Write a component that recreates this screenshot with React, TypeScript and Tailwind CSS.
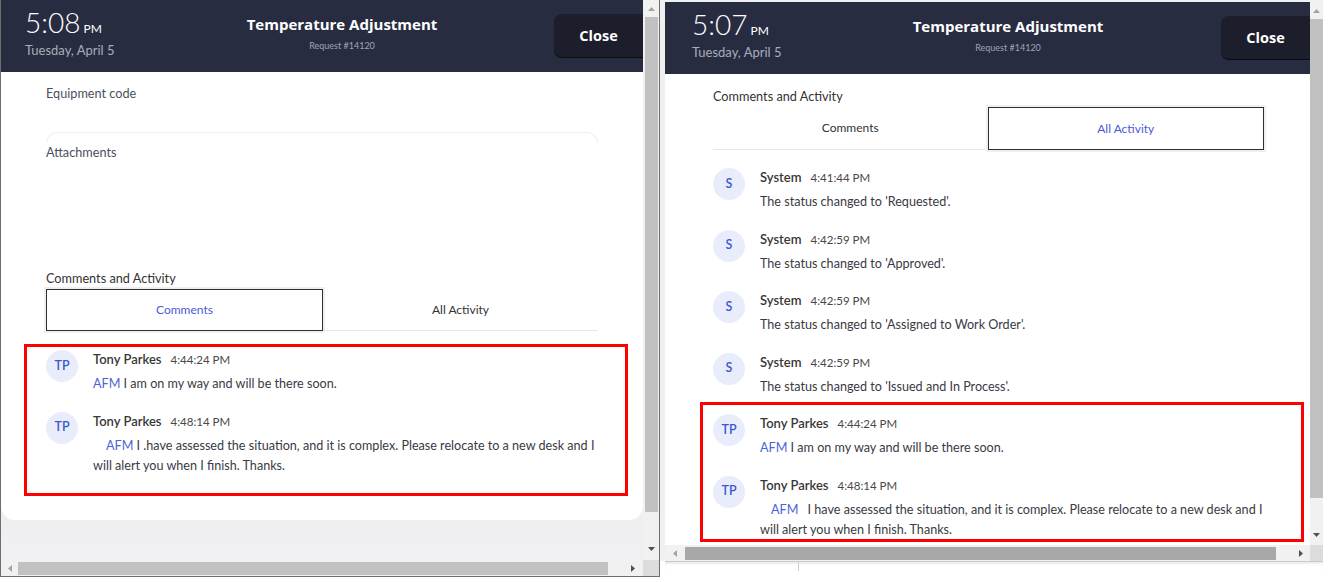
import React from 'react';

type Dir = 'up' | 'down' | 'left' | 'right';

// small scrollbar triangle
function Arrow({ dir, dark }: { dir: Dir; dark?: boolean }) {
  const vertical = dir === 'up' || dir === 'down';
  const w = vertical ? 7 : 4;
  const h = vertical ? 4 : 7;
  const points = {
    up: '0,4 3.5,0 7,4',
    down: '0,0 7,0 3.5,4',
    left: '4,0 4,7 0,3.5',
    right: '0,0 0,7 4,3.5',
  }[dir];
  return (
    <svg width={w} height={h} viewBox={`0 0 ${w} ${h}`}>
      <polygon points={points} fill={dark ? '#505050' : '#a3a3a3'} />
    </svg>
  );
}

const Header = ({ time, leftClass }: { time: string; leftClass: string }) => (
  <div className="flex h-[72px] shrink-0 bg-[#282c41] text-white">
    <div className={`${leftClass} pt-[6px] shrink-0`}>
      <div className="flex items-baseline">
        <span className="text-[28px] leading-[32px] font-light">{time}</span>
        <span className="ml-[3px] text-[12px] leading-[14px]">PM</span>
      </div>
      <div className="mt-[3px] text-[13px] leading-[18px] text-[#a9adba]">Tuesday, April 5</div>
    </div>
    <div className="w-[210px] shrink-0 pt-[14px] text-center">
      <div className="font-['Open_Sans',sans-serif] font-bold text-[15px] leading-[20px]">Temperature Adjustment</div>
      <div className="mt-[6px] text-[9px] leading-[12px] text-[#a0a4b3]">Request #14120</div>
    </div>
    <div className="flex-1" />
    <button className="mt-[14px] h-[43px] w-[89px] shrink-0 rounded-l-[8px] bg-[#1c1e2b] shadow-[0_1px_0_#0b0c12] font-['Open_Sans',sans-serif] font-bold text-[14.5px] text-white">
      Close
    </button>
  </div>
);

const Tabs = ({ active, heightClass }: { active: 'comments' | 'all'; heightClass: string }) => {
  const on = 'border-[1.5px] border-[#2e2e2e] text-[#4b5ad6] shadow-[0_0_0_2px_#efeff1]';
  const off = 'border-b border-[#e7e8ec] text-[#333]';
  return (
    <div className={`flex ${heightClass}`}>
      <div className={`flex-1 flex items-center justify-center text-[12px] ${active === 'comments' ? on : off}`}>Comments</div>
      <div className={`flex-1 flex items-center justify-center text-[12px] ${active === 'all' ? on : off}`}>All Activity</div>
    </div>
  );
};

function Entry({ initials, name, time, children }: { initials: string; name: string; time: string; children: React.ReactNode }) {
  return (
    <div className="flex gap-[15px]">
      <div className="w-[32px] h-[32px] shrink-0 rounded-full bg-[#e9edfb] flex items-center justify-center text-[12.5px] font-semibold text-[#3c58cf]">
        {initials}
      </div>
      <div className="flex-1 min-w-0">
        <div className="h-[18px] flex items-baseline gap-[9px] overflow-visible">
          <span className="text-[13px] leading-[18px] font-semibold text-[#383838]">{name}</span>
          <span className="text-[11.5px] leading-[18px] text-[#474747]">{time}</span>
        </div>
        <div className="mt-[6px] text-[12.6px] leading-[20px] text-[#3a3a44] whitespace-nowrap">{children}</div>
      </div>
    </div>
  );
}

const Afm = ({ className = '' }: { className?: string }) => <span className={`text-[#4c63d9] ${className}`}>AFM</span>;

export default function App() {
  return (
    <div className="w-[1332px] h-[582px] overflow-hidden bg-white flex font-['Lato','Liberation_Sans',sans-serif] text-[#333]">
      {/* left window */}
      <div className="w-[660px] h-[577px] shrink-0 flex flex-col border-x border-b border-[#6f6f6f] bg-[#f0f0f0]">
        <div className="flex h-[560px]">
          <div className="w-[642px] h-full overflow-hidden bg-gradient-to-b from-[#e6e7eb] to-[#f0f0f3]">
            <div className="bg-white rounded-b-[14px] flex flex-col">
              <Header time="5:08" leftClass="w-[236px] pl-[24px]" />
              <div className="px-[45px] pt-[12px] pb-[44px]">
                <div className="text-[12.7px] leading-[18px] text-[#4b4f60]">Equipment code</div>
                <div className="mt-[30px] h-[11px] border-t border-x border-[#eef0f4] rounded-t-[12px]" />
                <div className="text-[12.7px] leading-[18px] text-[#4b4f60]">Attachments</div>
                <div className="mt-[108px] text-[12.7px] leading-[18px] text-[#333]">Comments and Activity</div>
                <div className="mt-[2px]">
                  <Tabs active="comments" heightClass="h-[42px]" />
                </div>
                <div className="relative mt-[19px] flex flex-col gap-[17.5px]">
                  <Entry initials="TP" name="Tony Parkes" time="4:44:24 PM">
                    <Afm /> I am on my way and will be there soon.
                  </Entry>
                  <Entry initials="TP" name="Tony Parkes" time="4:48:14 PM">
                    <Afm className="ml-[13px]" /> I .have assessed the situation, and it is complex. Please relocate to a new desk and I
                    <br />
                    will alert you when I finish. Thanks.
                  </Entry>
                  <div className="absolute top-[-6px] bottom-[-20px] left-[-22px] right-[-30px] border-[3px] border-[#ff0000] pointer-events-none" />
                </div>
              </div>
            </div>
          </div>
          <div className="w-[16px] h-full bg-[#f1f1f1] flex flex-col items-center">
            <div className="h-[17px] w-full flex items-center justify-center"><Arrow dir="up" /></div>
            <div className="w-[13px] h-[495px] bg-[#c1c1c1]" />
            <div className="flex-1" />
            <div className="h-[22px] w-full flex items-center justify-center"><Arrow dir="down" dark /></div>
          </div>
        </div>
        <div className="flex h-[16px] bg-[#f1f1f1]">
          <div className="w-[17px] flex items-center justify-center"><Arrow dir="left" /></div>
          <div className="w-[590px] my-[1.5px] bg-[#c1c1c1]" />
          <div className="flex-1" />
          <div className="w-[20px] flex items-center justify-center"><Arrow dir="right" dark /></div>
          <div className="w-[16px] bg-[#dcdcdc]" />
        </div>
      </div>

      {/* right window */}
      <div className="w-[663px] shrink-0 flex flex-col">
        <div className="bg-[#f0f0f0] pt-[2px] pl-[5px]">
          <div className="w-[658px] flex flex-col">
            <div className="flex h-[543px]">
              <div className="w-[645px] h-full overflow-hidden bg-white">
                <Header time="5:07" leftClass="w-[238px] pl-[27px]" />
                <div className="pl-[48px] pr-[46px] pt-[13px]">
                  <div className="text-[12.7px] leading-[18px] text-[#333]">Comments and Activity</div>
                  <div className="mt-[2px]">
                    <Tabs active="all" heightClass="h-[43px]" />
                  </div>
                  <div className="mt-[18px] flex flex-col gap-[17.5px]">
                    <Entry initials="S" name="System" time="4:41:44 PM">The status changed to 'Requested'.</Entry>
                    <Entry initials="S" name="System" time="4:42:59 PM">The status changed to 'Approved'.</Entry>
                    <Entry initials="S" name="System" time="4:42:59 PM">The status changed to 'Assigned to Work Order'.</Entry>
                    <Entry initials="S" name="System" time="4:42:59 PM">The status changed to 'Issued and In Process'.</Entry>
                    <div className="relative flex flex-col gap-[17.5px]">
                      <Entry initials="TP" name="Tony Parkes" time="4:44:24 PM">
                        <Afm /> I am on my way and will be there soon.
                      </Entry>
                      <Entry initials="TP" name="Tony Parkes" time="4:48:14 PM">
                        <Afm className="ml-[11px] mr-[6px]" /> I have assessed the situation, and it is complex. Please relocate to a new desk and I
                        <br />
                        will alert you when I finish. Thanks.
                      </Entry>
                      <div className="absolute top-[-12px] bottom-[-2px] left-[-13px] right-[-40px] border-[3px] border-[#ff0000] pointer-events-none" />
                    </div>
                  </div>
                </div>
              </div>
              <div className="w-[13px] h-full bg-[#f1f1f1] flex flex-col items-center">
                <div className="h-[17px] w-full flex items-center justify-center"><Arrow dir="up" /></div>
                <div className="w-full h-[479px] bg-[#c1c1c1]" />
                <div className="flex-1" />
                <div className="h-[20px] w-full flex items-center justify-center"><Arrow dir="down" dark /></div>
              </div>
            </div>
            <div className="flex h-[16px] bg-[#f1f1f1]">
              <div className="w-[20px] flex items-center justify-center"><Arrow dir="left" /></div>
              <div className="w-[591px] my-[1.5px] bg-[#a8a8a8]" />
              <div className="flex-1" />
              <div className="w-[18px] flex items-center justify-center"><Arrow dir="right" dark /></div>
              <div className="w-[13px] bg-[#dcdcdc]" />
            </div>
          </div>
        </div>
        {/* edge of the page underneath */}
        <div className="ml-[5px] w-[658px] h-[10px] bg-white border-t border-[#c9c9c9] shadow-[inset_0_2px_2px_rgba(0,0,0,0.08)] flex">
          <div className="w-[134px] border-r border-[#cfcfcf]" />
        </div>
      </div>
    </div>
  );
}
